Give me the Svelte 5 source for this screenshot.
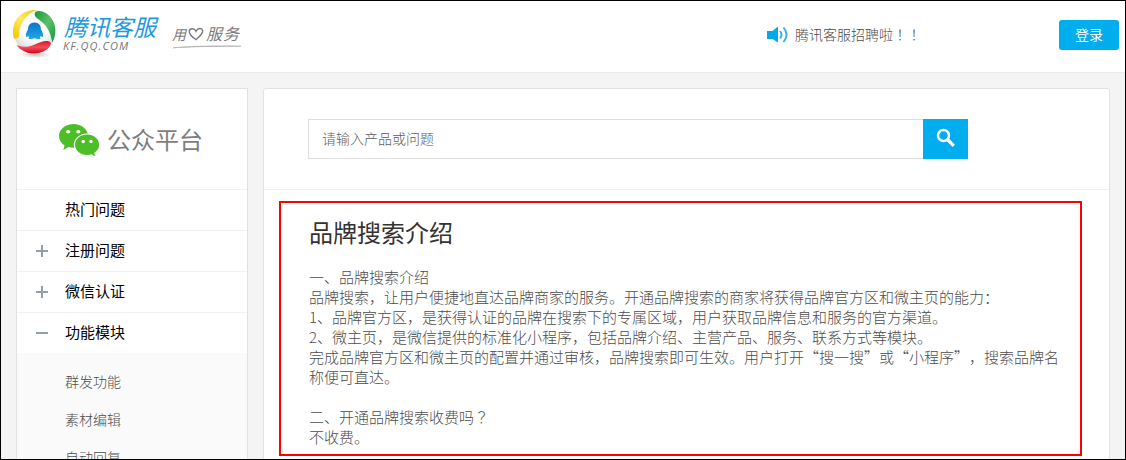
<script>
  const menu = [
    { label: "热门问题", icon: "" },
    { label: "注册问题", icon: "plus" },
    { label: "微信认证", icon: "plus" },
    { label: "功能模块", icon: "minus", children: ["群发功能", "素材编辑", "自动回复"] },
  ];

  const lines = [
    { text: "一、品牌搜索介绍" },
    { text: "品牌搜索，让用户便捷地直达品牌商家的服务。开通品牌搜索的商家将获得品牌官方区和微主页的能力：" },
    { text: "1、品牌官方区，是获得认证的品牌在搜索下的专属区域，用户获取品牌信息和服务的官方渠道。" },
    { text: "2、微主页，是微信提供的标准化小程序，包括品牌介绍、主营产品、服务、联系方式等模块。" },
    { text: "完成品牌官方区和微主页的配置并通过审核，品牌搜索即可生效。用户打开“搜一搜”或“小程序”，搜索品牌名称便可直达。" },
    { text: "" },
    { text: "二、开通品牌搜索收费吗", mark: "？" },
    { text: "不收费。" },
  ];

  let keyword = "";
</script>

<div class="page" lang="zh-CN">
  <header class="header">
    <a class="logo" href="#home" aria-label="腾讯客服">
      <svg class="ball" width="48" height="52" viewBox="0 0 48 52">
        <defs>
          <radialGradient id="globe" cx="50%" cy="42%" r="58%">
            <stop offset="0.5" stop-color="#fff" />
            <stop offset="1" stop-color="#d4d7d9" />
          </radialGradient>
          <radialGradient id="shade">
            <stop offset="0" stop-color="#999" stop-opacity="0.6" />
            <stop offset="1" stop-color="#999" stop-opacity="0" />
          </radialGradient>
          <linearGradient id="yellow" x1="0" y1="1" x2="1" y2="0">
            <stop offset="0" stop-color="#f3c400" />
            <stop offset="0.5" stop-color="#ffe95c" />
            <stop offset="1" stop-color="#f1cc20" />
          </linearGradient>
          <linearGradient id="green" x1="0" y1="0" x2="1" y2="1">
            <stop offset="0" stop-color="#149a3a" />
            <stop offset="0.5" stop-color="#5cc069" />
            <stop offset="1" stop-color="#0d9438" />
          </linearGradient>
          <linearGradient id="red" x1="0" y1="0" x2="0" y2="1">
            <stop offset="0" stop-color="#d8142a" />
            <stop offset="0.5" stop-color="#f0505a" />
            <stop offset="1" stop-color="#d8001c" />
          </linearGradient>
          <linearGradient id="blue" x1="0" y1="0" x2="0" y2="1">
            <stop offset="0" stop-color="#0878c8" />
            <stop offset="1" stop-color="#22a5e8" />
          </linearGradient>
        </defs>
        <ellipse cx="23" cy="45.500" rx="16" ry="3.500" fill="url(#shade)" />
        <circle cx="22.500" cy="22.500" r="21" fill="url(#globe)" />
        <path d="M25 1C11 0 1 10 1 22c0 3 .2 5 1 7 1.500 1.500 4.500.5 5-2C7 15 14 5 25 1z" fill="url(#yellow)" />
        <path d="M23 3.500c4-3.500 12-.5 16.500 6 5 7 5 16 .8 24C39 27 37.500 21 33 16 28 10 21 9 23 3.500z" fill="url(#green)" />
        <path d="M4.500 36c6 2.500 12 2.300 17 0 7-3.500 14-5.500 17-2.800 1.500 3-2.500 7-7 9.300-10 4-21 1.700-27-6.500z" fill="url(#red)" />
        <path d="M22.500 13.500c-4.500 0-6.500 3-6.500 7-1.500 2.300-2.700 5-1.800 7.500.7.500 1.500-.8 2-1.300.2.700.5 1.200.9 1.700-1 .7-.6 1.600 1.400 1.600 1.600 0 3-.2 4-.7 1 .5 2.400.7 4 .7 2 0 2.400-.9 1.400-1.600.4-.5.7-1 .9-1.700.5.500 1.300 1.800 2 1.300.9-2.500-.3-5.200-1.800-7.500 0-4-2-7-6.500-7z" fill="url(#blue)" />
      </svg>
      <span class="brand">
        <b>腾讯客服</b>
        <em>KF.QQ.COM</em>
      </span>
    </a>
    <div class="slogan">
      <div class="slogan-text">
        <span>用</span>
        <svg width="16" height="14" viewBox="0 0 16 14">
          <path d="M8 12.500C4 10 1 7 1.300 4 1.800.8 6.500 1 8 4.300 9.500 1 14 .5 14.700 3.500 15 7 11 10 7.500 13" fill="none" stroke="#7b7b7b" stroke-width="1.400" />
        </svg>
        <span>服务</span>
      </div>
      <svg width="70" height="4" viewBox="0 0 70 4">
        <path d="M1 2.800C20 1 45 .6 69 1.200 45 1 18 1.800 1 2.800z" fill="#aaa" stroke="#aaa" stroke-width="0.600" />
      </svg>
    </div>
    <a class="notice" href="#jobs">
      <svg width="22" height="18" viewBox="0 0 22 18">
        <path d="M0 5h5.500L11 .5v16L5.500 13H0z" fill="#00a9e9" />
        <path d="M13 5q3 3.800 0 7.500M16.500 1.500q6 7.300 0 14.500" fill="none" stroke="#39afe3" stroke-width="1.900" />
      </svg>
      <span>腾讯客服招聘啦<span class="mark" lang="zh-TW">！！</span></span>
    </a>
    <button class="login">登录</button>
  </header>

  <div class="main">
    <aside class="sidebar">
      <div class="product">
        <svg width="41" height="33" viewBox="0 0 41 33">
          <path d="M14.500 0C6.500 0 0 5.200 0 12c0 4 2.200 7.300 5.600 9.500L4.300 26l5.200-2.900c1.700.5 3.300.7 5 .7 8 0 14.500-5.200 14.500-11.900S22.500 0 14.500 0z" fill="#4cbf27" />
          <ellipse cx="28" cy="21" rx="13.200" ry="11.500" fill="#fff" />
          <path d="M28 10.500c-6.700 0-12 4.600-12 10.200S21.300 31 28 31c1.700 0 3.200-.3 4.600-.7l3.600 2.200-.9-3.800c3-1.900 4.900-4.700 4.900-8 0-5.600-5.500-10.200-12.200-10.200z" fill="#4cbf27" />
          <g fill="#fff">
            <ellipse cx="9.200" cy="7.700" rx="2.100" ry="1.800" />
            <ellipse cx="19.300" cy="7.700" rx="2.100" ry="1.800" />
            <circle cx="24.200" cy="17.500" r="1.700" />
            <circle cx="32" cy="17.500" r="1.700" />
          </g>
        </svg>
        <span>公众平台</span>
      </div>
      <ul class="menu">
        {#each menu as item}
          <li>
            <a class="menu-item" href="#menu">
              <i class={item.icon}></i>
              <span>{item.label}</span>
            </a>
            {#if item.children}
              <ul class="submenu">
                {#each item.children as child}
                  <li>{child}</li>
                {/each}
              </ul>
            {/if}
          </li>
        {/each}
      </ul>
    </aside>

    <section class="content">
      <form class="search">
        <input type="text" placeholder="请输入产品或问题" bind:value={keyword} />
        <button type="button" aria-label="搜索">
          <svg width="20" height="20" viewBox="0 0 20 20">
            <circle cx="7.500" cy="7.500" r="5.500" fill="none" stroke="#fff" stroke-width="2.500" />
            <path d="M11.500 11.500l6.300 6.300" stroke="#fff" stroke-width="3.200" />
          </svg>
        </button>
      </form>
      <article class="answer">
        <h1>品牌搜索介绍</h1>
        {#each lines as line}
          <p>{line.text}{#if line.mark}<span class="mark" lang="zh-TW">{line.mark}</span>{/if}</p>
        {/each}
      </article>
    </section>
  </div>
</div>

<style>
  :global(body) {
    margin: 0;
    overflow: hidden;
  }

  .page {
    box-sizing: border-box;
    height: 460px;
    border: 1px solid #000;
    overflow: hidden;
    background: #f4f4f4;
    font-family: "Noto Sans CJK SC", sans-serif;
    font-weight: 300;
    text-spacing-trim: space-all;
    color: #4c4c4c;
  }

  a {
    color: inherit;
    text-decoration: none;
  }

  ul {
    margin: 0;
    padding: 0;
    list-style: none;
  }

  svg {
    display: block;
    flex: none;
  }

  /* Centred full-width ! and ? */
  .mark {
    font-family: "Noto Sans CJK TC", sans-serif;
  }

  /* Top bar */
  .header {
    box-sizing: border-box;
    display: flex;
    height: 72px;
    padding: 0 6px 0 11px;
    border-bottom: 1px solid #ebebeb;
    background: #fff;
  }

  .logo {
    display: flex;
    padding-top: 8px;
  }

  .brand {
    display: flex;
    flex-direction: column;
    width: 100px;
    padding: 3px 0 0 4px;
  }

  .brand b {
    font-size: 23px;
    line-height: 28px;
    font-weight: 400;
    font-style: italic;
    color: #1a98e0;
    white-space: nowrap;
  }

  .brand em {
    margin-left: -1px;
    font-family: "Open Sans", sans-serif;
    font-size: 11px;
    line-height: 12px;
    font-weight: 400;
    letter-spacing: 1.1px;
    color: #777;
  }

  .slogan {
    padding: 21px 0 0 8px;
    color: #7b7b7b;
  }

  .slogan-text {
    display: flex;
    align-items: center;
    height: 23px;
    gap: 2px;
    font-size: 16px;
    font-weight: 400;
    font-style: italic;
    letter-spacing: 1px;
  }

  .slogan-text span {
    padding-bottom: 2px;
  }

  .slogan-text span:first-child {
    width: 14px;
    padding-bottom: 0;
    font-size: 14px;
    letter-spacing: 0;
  }

  .notice {
    display: flex;
    align-items: center;
    gap: 6px;
    height: 68px;
    margin-left: auto;
    font-size: 14px;
  }

  .notice > span {
    padding-bottom: 2px;
  }

  .login {
    width: 60px;
    height: 30px;
    margin: 19px 0 0 138px;
    padding: 0 0 2px;
    border: 0;
    border-radius: 3px;
    background: #00adee;
    font: 400 14px/28px "Noto Sans CJK SC", sans-serif;
    color: #fff;
  }

  /* Columns */
  .main {
    display: flex;
    align-items: flex-start;
    gap: 15px;
    padding: 15px;
  }

  .sidebar {
    box-sizing: border-box;
    width: 232px;
    height: 420px;
    border: 1px solid #e2e2e2;
    background: #fff;
  }

  .product {
    display: flex;
    align-items: center;
    gap: 7px;
    height: 100px;
    padding-left: 42px;
    font-size: 24px;
    font-weight: 400;
    color: #7e7e7e;
  }

  .product svg {
    margin-top: 2px;
  }

  .product span {
    padding-bottom: 2px;
  }

  .menu-item {
    display: flex;
    align-items: center;
    height: 40px;
    padding-left: 19px;
    border-top: 1px solid #f2f2f2;
    font-size: 15px;
    color: #000;
  }

  .menu-item span {
    padding-bottom: 4px;
    font-weight: 400;
  }

  .menu-item i {
    width: 12px;
    height: 12px;
    margin-right: 17px;
  }

  .plus {
    background:
      linear-gradient(#93a0aa, #93a0aa) center / 12px 2px no-repeat,
      linear-gradient(#93a0aa, #93a0aa) center / 2px 12px no-repeat;
  }

  .minus {
    background: linear-gradient(#93a0aa, #93a0aa) center / 12px 2px no-repeat;
  }

  .submenu {
    height: 160px;
    padding: 9px 0 0 48px;
    background: #fafafa;
    font-size: 14px;
    line-height: 38px;
  }

  .content {
    box-sizing: border-box;
    width: 847px;
    height: 420px;
    border: 1px solid #e2e2e2;
    border-radius: 3px;
    background: #fff;
  }

  .search {
    display: flex;
    height: 40px;
    padding: 30px 44px;
    border-bottom: 1px solid #f2f2f2;
  }

  .search input {
    box-sizing: border-box;
    width: 615px;
    padding: 0 13px 2px;
    border: 1px solid #ddd;
    border-right: 0;
    outline: none;
    font: 300 14px "Noto Sans CJK SC", sans-serif;
    color: #666;
  }

  .search input::placeholder {
    color: #5c5c5c;
  }

  .search button {
    width: 45px;
    padding: 0 0 2px 13px;
    border: 0;
    background: #00adee;
  }

  .answer {
    box-sizing: border-box;
    width: 803px;
    height: 255px;
    margin: 11px 0 0 15px;
    padding: 10px 20px 0 28px;
    border: 2px solid #f00;
  }

  .answer h1 {
    margin: 0 0 16px;
    font-size: 24px;
    line-height: 38px;
    font-weight: 400;
    color: #333;
  }

  .answer p {
    min-height: 20px;
    margin: 0;
    font-size: 15px;
    line-height: 20px;
  }
</style>
